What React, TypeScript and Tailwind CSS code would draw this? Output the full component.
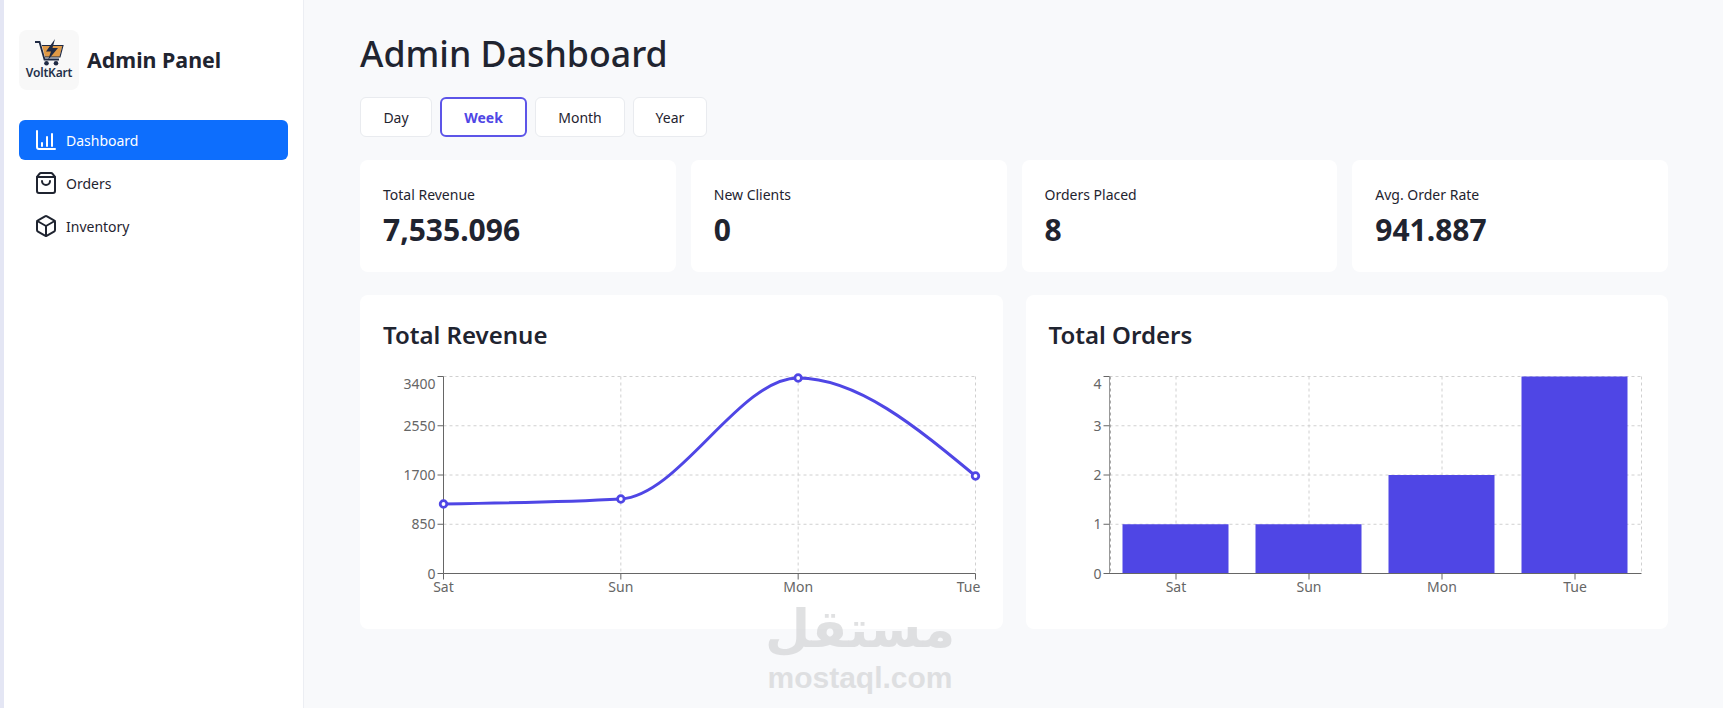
import React from "react";
import { Box, ShoppingBag } from "lucide-react";

const font = { fontFamily: '"Noto Sans", "Open Sans", sans-serif' };

function monotone(pts: [number, number][]) {
  const n = pts.length;
  const h: number[] = [];
  const s: number[] = [];
  for (let i = 0; i < n - 1; i++) {
    h.push(pts[i + 1][0] - pts[i][0]);
    s.push((pts[i + 1][1] - pts[i][1]) / h[i]);
  }
  const t: number[] = new Array(n).fill(0);
  for (let i = 1; i < n - 1; i++) {
    const p = (s[i - 1] * h[i] + s[i] * h[i - 1]) / (h[i - 1] + h[i]);
    t[i] = (Math.sign(s[i - 1]) + Math.sign(s[i])) * Math.min(Math.abs(s[i - 1]), Math.abs(s[i]), 0.5 * Math.abs(p)) || 0;
  }
  t[0] = (3 * s[0] - t[1]) / 2;
  t[n - 1] = (3 * s[n - 2] - t[n - 2]) / 2;
  let d = `M${pts[0][0]},${pts[0][1]}`;
  for (let i = 0; i < n - 1; i++) {
    const dx = h[i] / 3;
    d += `C${pts[i][0] + dx},${pts[i][1] + dx * t[i]} ${pts[i + 1][0] - dx},${pts[i + 1][1] - dx * t[i + 1]} ${pts[i + 1][0]},${pts[i + 1][1]}`;
  }
  return d;
}

const gridColor = "#d0d0d0";
const axisColor = "#666";
const labelColor = "#666";

function RevenueChart() {
  const W = 640;
  const H = 225;
  const x0 = 83.5;
  const top = 6.5;
  const bottom = 203.5;
  const step = 177.33;
  const xs = [0, 1, 2, 3].map((i) => x0 + i * step);
  const ys = [top, top + 49.25, top + 98.5, top + 147.75, bottom];
  const labels = ["3400", "2550", "1700", "850", "0"];
  const pts: [number, number][] = [
    [xs[0], 134],
    [xs[1], 129],
    [xs[2], 8],
    [xs[3], 106],
  ];
  return (
    <svg width={W} height={H} className="block" style={font}>
      {ys.slice(0, 4).map((y) => (
        <line key={y} x1={x0} x2={xs[3]} y1={y} y2={y} stroke={gridColor} strokeDasharray="3 3" />
      ))}
      {xs.slice(1).map((x) => (
        <line key={x} x1={x} x2={x} y1={top} y2={bottom} stroke={gridColor} strokeDasharray="3 3" />
      ))}
      <line x1={x0} x2={x0} y1={top} y2={bottom} stroke={axisColor} />
      <line x1={x0} x2={xs[3]} y1={bottom} y2={bottom} stroke={axisColor} />
      {ys.map((y, i) => (
        <g key={y}>
          <line x1={x0 - 6} x2={x0} y1={y} y2={y} stroke={axisColor} />
          <text x={x0 - 8} y={i === 0 ? y + 12 : y + 5} textAnchor="end" fontSize="14" fill={labelColor}>
            {labels[i]}
          </text>
        </g>
      ))}
      {xs.map((x, i) => (
        <g key={x}>
          <line x1={x} x2={x} y1={bottom} y2={bottom + 6} stroke={axisColor} />
          <text x={i === 3 ? x - 7 : x} y={bottom + 18} textAnchor="middle" fontSize="14" fill={labelColor}>
            {["Sat", "Sun", "Mon", "Tue"][i]}
          </text>
        </g>
      ))}
      <path d={monotone(pts)} fill="none" stroke="#4f46e5" strokeWidth="3" />
      {pts.map((p) => (
        <circle key={p[0]} cx={p[0]} cy={p[1]} r="3.3" fill="#fff" stroke="#4f46e5" strokeWidth="2.8" />
      ))}
    </svg>
  );
}

function OrdersChart() {
  const W = 620;
  const H = 225;
  const x0 = 83.5;
  const top = 6.5;
  const bottom = 203.5;
  const band = 133;
  const xs = [0, 1, 2, 3].map((i) => x0 + band * (i + 0.5));
  const right = x0 + band * 4;
  const ys = [top, top + 49.25, top + 98.5, top + 147.75, bottom];
  const vals = [1, 1, 2, 4];
  return (
    <svg width={W} height={H} className="block" style={font}>
      {ys.slice(0, 4).map((y) => (
        <line key={y} x1={x0} x2={right} y1={y} y2={y} stroke={gridColor} strokeDasharray="3 3" />
      ))}
      {[...xs, right].map((x) => (
        <line key={x} x1={x} x2={x} y1={top} y2={bottom} stroke={gridColor} strokeDasharray="3 3" />
      ))}
      {vals.map((v, i) => {
        const h = (v / 4) * (bottom - top);
        return <rect key={i} x={xs[i] - 53.5} y={bottom - h} width={106} height={h} fill="#4f46e5" />;
      })}
      <line x1={x0} x2={x0} y1={top} y2={bottom} stroke="#999" strokeWidth="1" />
      <line x1={x0 + 1} x2={x0 + 1} y1={top} y2={bottom} stroke="#aaa" strokeDasharray="3 3" />
      <line x1={x0 - 1} x2={right} y1={bottom} y2={bottom} stroke={axisColor} />
      {ys.map((y, i) => (
        <g key={y}>
          <line x1={x0 - 6} x2={x0} y1={y} y2={y} stroke={axisColor} />
          <text x={x0 - 8} y={i === 0 ? y + 12 : y + 5} textAnchor="end" fontSize="14" fill={labelColor}>
            {4 - i}
          </text>
        </g>
      ))}
      {xs.map((x, i) => (
        <g key={x}>
          <line x1={x} x2={x} y1={bottom} y2={bottom + 6} stroke={axisColor} />
          <text x={x} y={bottom + 18} textAnchor="middle" fontSize="14" fill={labelColor}>
            {["Sat", "Sun", "Mon", "Tue"][i]}
          </text>
        </g>
      ))}
    </svg>
  );
}

function Logo() {
  return (
    <div className="w-[60px] h-[60px] rounded-lg bg-[#f8f8f8] flex flex-col items-center pt-[9px]">
      <svg width="30" height="27" viewBox="0 0 30 27" className="block">
        <path d="M8 6.5 L28.5 6.5 L25.5 18 L11 18 Z" fill="#e09a47" />
        <path d="M1 3 H5.5 L10.5 20.5 H25" fill="none" stroke="#1f2a44" strokeWidth="1.8" />
        <path d="M8 6.5 H29 L26 18 H11" fill="none" stroke="#1f2a44" strokeWidth="1.1" />
        <path d="M21 0 L12 12.5 H17 L14 21 L24 9 H18.5 Z" fill="#1f2a44" />
        <circle cx="12.5" cy="24.3" r="2.3" fill="#1f2a44" />
        <circle cx="22" cy="24.3" r="2.3" fill="#1f2a44" />
      </svg>
      <span className="text-[12px] leading-[13px] font-semibold text-[#24304a] tracking-[-0.2px]" style={font}>
        VoltKart
      </span>
    </div>
  );
}

function ChartBars() {
  return (
    <svg width={24} height={24} viewBox="0 0 24 24" fill="none" stroke="currentColor" strokeWidth="2" strokeLinecap="round" strokeLinejoin="round">
      <path d="M3 3v16a2 2 0 0 0 2 2h16" />
      <path d="M8 18v-3" />
      <path d="M13 18V9" />
      <path d="M18 18V6" />
    </svg>
  );
}

function NavItem(props: { label: string; active?: boolean; icon: React.ReactNode }) {
  return (
    <div
      className={
        props.active
          ? "h-10 flex items-center gap-[8px] pl-[15px] rounded-md bg-[#0d6efd] text-white"
          : "h-10 flex items-center gap-[8px] pl-[15px] rounded-md text-[#1f2430]"
      }
    >
      {props.icon}
      <span className="text-sm pt-[2px]">{props.label}</span>
    </div>
  );
}

function Tab(props: { label: string; width: string; active?: boolean }) {
  return (
    <div
      className={
        props.active
          ? `${props.width} h-10 pt-[2px] flex items-center justify-center rounded-md bg-white border-2 border-[#5d55e8] text-[#4f46e5] font-bold text-sm`
          : `${props.width} h-10 pt-[2px] flex items-center justify-center rounded-md bg-white border border-[#e9ebef] text-[#1f2430] text-sm`
      }
    >
      {props.label}
    </div>
  );
}

function Stat(props: { label: string; value: string }) {
  return (
    <div className="bg-white rounded-lg px-[23px] pt-[25px] h-[112px]">
      <div className="text-sm leading-5 text-[#1f2430]">{props.label}</div>
      <div className="text-[30px] leading-[40px] font-bold text-[#1f2430] mt-[5px]">{props.value}</div>
    </div>
  );
}

export default function App() {
  return (
    <div className="relative flex w-[1723px] h-[708px] overflow-hidden bg-[#f8f9fb]" style={font}>
      <div className="w-[4px] bg-[#e4e6f4]" />
      <aside className="w-[300px] bg-white border-r border-[#eceef3] px-[15px] pt-[30px]">
        <div className="flex items-center gap-2">
          <Logo />
          <span className="text-[21.4px] font-bold text-[#1f2430] pt-[1px]">Admin Panel</span>
        </div>
        <nav className="mt-[30px] flex flex-col gap-[3px] w-[269px]">
          <NavItem label="Dashboard" active icon={<ChartBars />} />
          <NavItem label="Orders" icon={<ShoppingBag size={24} strokeWidth={2} />} />
          <NavItem label="Inventory" icon={<Box size={24} strokeWidth={2} />} />
        </nav>
      </aside>
      <main className="w-[1308px] ml-[56px] pt-[26px]">
        <h1 className="text-[35.7px] leading-[54px] font-medium text-[#1f2430]">Admin Dashboard</h1>
        <div className="flex gap-2 mt-[17px]">
          <Tab label="Day" width="w-[72px]" />
          <Tab label="Week" width="w-[87px]" active />
          <Tab label="Month" width="w-[90px]" />
          <Tab label="Year" width="w-[74px]" />
        </div>
        <div className="grid grid-cols-4 gap-[15px] mt-[23px]">
          <Stat label="Total Revenue" value="7,535.096" />
          <Stat label="New Clients" value="0" />
          <Stat label="Orders Placed" value="8" />
          <Stat label="Avg. Order Rate" value="941.887" />
        </div>
        <div className="grid grid-cols-2 gap-[23px] mt-[23px]">
          <section className="bg-white rounded-lg h-[334px] px-[23px] pt-[22px]">
            <h2 className="text-2xl leading-[36px] font-semibold text-[#1f2430]">Total Revenue</h2>
            <div className="mt-[17px] -ml-[23px]">
              <RevenueChart />
            </div>
          </section>
          <section className="bg-white rounded-lg h-[334px] px-[23px] pt-[22px]">
            <h2 className="text-2xl leading-[36px] font-semibold text-[#1f2430]">Total Orders</h2>
            <div className="mt-[17px] -ml-[23px]">
              <OrdersChart />
            </div>
          </section>
        </div>
      </main>
      <div className="absolute left-[765px] top-[598px] w-[190px] flex flex-col items-center text-[#d4d5d7] opacity-70 pointer-events-none">
        <span className="text-[52px] leading-[63px] font-bold" style={{ fontFamily: '"DejaVu Sans", sans-serif' }}>مستقل</span>
        <span className="text-[30px] leading-[34px] font-bold" style={{ fontFamily: '"Liberation Sans", sans-serif' }}>mostaql.com</span>
      </div>
    </div>
  );
}
